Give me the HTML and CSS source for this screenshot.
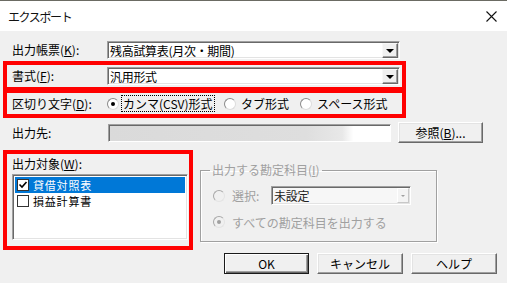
FILE: index.html
```html
<!DOCTYPE html>
<html lang="ja">
<head>
    <meta charset="UTF-8">
    <title>エクスポート</title>
    <link rel="stylesheet" href="styles.css">
</head>
<body>
    <div class="titlebar">
        <span class="title">エクスポート</span>
        <svg class="close" width="11" height="11" viewBox="0 0 11 11">
            <path d="M0.5 0.5 L10.5 10.5 M10.5 0.5 L0.5 10.5" stroke="#111" stroke-width="1.1" fill="none"/>
        </svg>
    </div>

    <div class="dialog">
        <div class="row row-plain">
            <label class="lbl">出力帳票(<u>K</u>):</label>
            <div class="combo">
                <span class="combo-text">残高試算表(月次・期間)</span>
                <span class="drop"><i class="tri"></i></span>
            </div>
        </div>

        <div class="mark mark-wide mark-fmt">
            <div class="row">
                <label class="lbl">書式(<u>F</u>):</label>
                <div class="combo">
                    <span class="combo-text">汎用形式</span>
                    <span class="drop"><i class="tri"></i></span>
                </div>
            </div>
        </div>

        <div class="mark mark-wide mark-sep">
            <div class="row row-radios">
                <label class="lbl">区切り文字(<u>D</u>):</label>
                <span class="opt opt-csv"><i class="radio on"></i><span class="focus">カンマ(CSV)形式</span></span>
                <span class="opt opt-tab"><i class="radio"></i><span class="opt-text">タブ形式</span></span>
                <span class="opt"><i class="radio"></i><span class="opt-text">スペース形式</span></span>
            </div>
        </div>

        <div class="row row-plain row-dest">
            <label class="lbl">出力先:</label>
            <div class="field"></div>
            <button class="btn btn-browse">参照(<u>B</u>)...</button>
        </div>

        <div class="lower">
            <div class="mark mark-target">
                <div class="lbl-top">出力対象(<u>W</u>):</div>
                <ul class="listbox">
                    <li class="sel"><i class="check on"><svg width="10" height="10" viewBox="0 0 10 10"><path d="M1.5 4.5 L4 7 L8.5 2" stroke="#000" stroke-width="1.6" fill="none"/></svg></i><span>貸借対照表</span></li>
                    <li><i class="check"></i><span>損益計算書</span></li>
                </ul>
            </div>

            <fieldset class="group">
                <legend>出力する勘定科目(<u>I</u>)</legend>
                <div class="grow grow-pick">
                    <i class="radio dis"></i>
                    <span class="glbl">選択:</span>
                    <div class="combo combo-dis">
                        <span class="combo-text">未設定</span>
                        <span class="drop drop-dis"><i class="tri tri-dis"></i></span>
                    </div>
                </div>
                <div class="grow grow-all">
                    <i class="radio dis on"></i>
                    <span class="glbl">すべての勘定科目を出力する</span>
                </div>
            </fieldset>
        </div>

        <div class="buttons">
            <button class="btn btn-default">OK</button>
            <button class="btn">キャンセル</button>
            <button class="btn">ヘルプ</button>
        </div>
    </div>
</body>
</html>
```

FILE: styles.css
```css
* {
    box-sizing: border-box;
}
body {
    margin: 0;
    width: 507px;
    height: 283px;
    overflow: hidden;
    background: #f0f0f0;
    font-family: "Noto Sans CJK JP", sans-serif;
    font-size: 12px;
    color: #000;
}
u {
    text-decoration: underline;
    text-underline-offset: 1px;
}
.titlebar {
    height: 31px;
    background: #fff;
    border-top: 1px solid #6b6b63;
    display: flex;
    align-items: center;
    padding: 0 10px 0 8px;
}
.title {
    font-size: 12px;
    letter-spacing: -1.4px;
    color: #111;
}
.close {
    margin-left: auto;
}
.dialog {
    padding: 0 0 0 3px;
}
.row {
    display: flex;
    align-items: center;
    height: 18px;
}
.row-plain {
    margin-left: 9px;
}
.row-plain:first-child {
    margin-top: 10px;
}
.lbl {
    width: 95px;
    line-height: 16px;
    white-space: nowrap;
}

/* red marker boxes */
.mark {
    border: 4px solid #ff0000;
    padding-left: 5px;
}
.mark-wide {
    width: 403px;
    padding-right: 2px;
}
.mark-fmt {
    margin-top: 2px;
    padding-top: 2px;
    padding-bottom: 2px;
}
.mark-sep {
    margin-top: -2px;
}
.row-radios {
    height: 21px;
}

/* combo box */
.combo {
    display: flex;
    width: 293px;
    height: 18px;
    background: #fff;
    border: 1px solid;
    border-color: #a0a0a0 #fff #fff #a0a0a0;
    box-shadow: inset 1px 1px 0 #696969, inset -1px -1px 0 #e3e3e3;
    padding: 1px 1px 1px 2px;
}
.combo-text {
    line-height: 15px;
    white-space: nowrap;
    letter-spacing: -0.3px;
}
.drop {
    margin-left: auto;
    width: 16px;
    height: 15px;
    background: #f0f0f0;
    border: 1px solid;
    border-color: #f8f8f8 #696969 #696969 #f8f8f8;
    box-shadow: inset -1px -1px 0 #a0a0a0;
    display: flex;
    align-items: center;
    justify-content: center;
}
.tri {
    width: 0;
    height: 0;
    border-left: 4px solid transparent;
    border-right: 4px solid transparent;
    border-top: 4px solid #000;
    margin-right: 1px;
}

/* radios */
.opt {
    display: flex;
    align-items: center;
}
.opt-csv {
    width: 117px;
}
.opt-tab {
    width: 76px;
}
.radio {
    position: relative;
    display: inline-block;
    width: 12px;
    height: 12px;
    border-radius: 50%;
    background: #fff;
    border: 1px solid;
    border-color: #8a8a8a #dcdcdc #dcdcdc #8a8a8a;
    flex: none;
}
.radio.on::after {
    content: "";
    position: absolute;
    left: 3px;
    top: 3px;
    width: 4px;
    height: 4px;
    border-radius: 50%;
    background: #000;
}
.radio.dis {
    background: #f0f0f0;
    border-color: #a8a8a8 #e4e4e4 #e4e4e4 #a8a8a8;
}
.radio.dis.on::after {
    background: #a0a0a0;
}
.focus {
    margin-left: 3px;
    padding: 0 1px;
    line-height: 15px;
    outline: 1px dotted #000;
    white-space: nowrap;
}
.opt-text {
    margin-left: 5px;
    white-space: nowrap;
}

/* destination */
.row-dest {
    margin-top: 4px;
    height: 21px;
}
.field {
    width: 283px;
    height: 18px;
    margin-left: 1px;
    border: 1px solid;
    border-color: #a0a0a0 #fff #fff #a0a0a0;
    box-shadow: inset 1px 1px 0 #696969;
    background: linear-gradient(to right, #dadada 0%, #dedede 70%, #e8e8e8 83%, #fff 87%);
}
.btn {
    font-family: inherit;
    font-size: 12px;
    color: #000;
    width: 86px;
    height: 21px;
    padding: 0;
    background: #f0f0f0;
    border: 1px solid;
    border-color: #fff #696969 #696969 #fff;
    box-shadow: inset -1px -1px 0 #a0a0a0, inset 1px 1px 0 #e3e3e3;
    line-height: 17px;
}
.btn-browse {
    width: 85px;
    margin-left: 7px;
}

/* lower area */
.lower {
    display: flex;
    align-items: flex-start;
    margin-top: 7px;
}
.mark-target {
    width: 190px;
    padding: 2px 1px 6px 5px;
}
.lbl-top {
    line-height: 16px;
    height: 16px;
    margin-bottom: 2px;
}
.listbox {
    list-style: none;
    margin: 0;
    width: 176px;
    height: 66px;
    padding: 2px 2px;
    background: #fff;
    border: 1px solid;
    border-color: #a0a0a0 #fff #fff #a0a0a0;
    box-shadow: inset 1px 1px 0 #696969, inset -1px -1px 0 #e3e3e3;
}
.listbox li {
    display: flex;
    align-items: center;
    height: 16px;
    padding-left: 2px;
    line-height: 16px;
    font-size: 11px;
    letter-spacing: 0.8px;
}
.listbox li.sel {
    background: #0078d7;
    color: #fff;
}
.check {
    display: flex;
    align-items: center;
    justify-content: center;
    width: 12px;
    height: 12px;
    margin-right: 4px;
    background: #fff;
    border: 1px solid #333;
    flex: none;
}

/* disabled group */
.group {
    margin: 12px 0 0 7px;
    width: 237px;
    height: 80px;
    padding: 0 8px 0 12px;
    border: 1px solid #a0a0a0;
    box-shadow: inset 1px 1px 0 #fff, 1px 1px 0 #fff;
    color: #a0a0a0;
}
.group legend {
    margin-left: -3px;
    padding: 0 2px;
    line-height: 16px;
}
.grow {
    display: flex;
    align-items: center;
}
.grow-pick {
    margin-top: 8px;
    height: 19px;
}
.grow-all {
    margin-top: 8px;
    height: 18px;
}
.glbl {
    margin-left: 7px;
    white-space: nowrap;
}
.grow-pick .glbl {
    width: 39px;
}
.combo-dis {
    width: 140px;
    height: 19px;
    background: #f7f7f7;
    color: #222;
}
.drop-dis {
    width: 12px;
    background: #f4f4f4;
    border-color: #fff #c8c8c8 #c8c8c8 #fff;
    box-shadow: none;
}
.tri-dis {
    border-left-width: 2px;
    border-right-width: 2px;
    border-top: 2px solid #a0a0a0;
}

/* bottom buttons */
.buttons {
    display: flex;
    justify-content: flex-end;
    gap: 8px;
    margin-top: 3px;
    padding-right: 10px;
}
.btn-default {
    width: 85px;
    border: 1px solid #1a1a1a;
    box-shadow: inset 1px 1px 0 #fff, inset -1px -1px 0 #696969, inset -2px -2px 0 #a0a0a0;
}
```
